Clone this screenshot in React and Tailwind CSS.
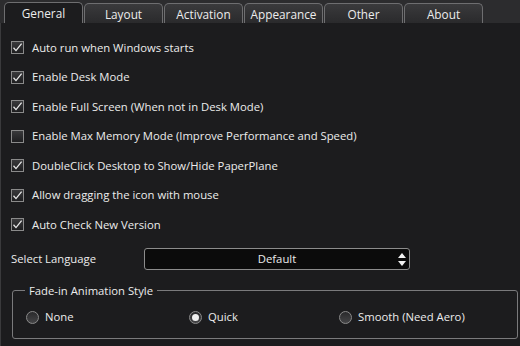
import React from "react";

const tabs = ["General", "Layout", "Activation", "Appearance", "Other", "About"];

const options = [
  { label: "Auto run when Windows starts", checked: true },
  { label: "Enable Desk Mode", checked: true },
  { label: "Enable Full Screen (When not in Desk Mode)", checked: true },
  { label: "Enable Max Memory Mode (Improve Performance and Speed)", checked: false },
  { label: "DoubleClick Desktop to Show/Hide PaperPlane", checked: true },
  { label: "Allow dragging the icon with mouse", checked: true },
  { label: "Auto Check New Version", checked: true },
];

const Check = ({ checked }) => (
  <span className="w-[13px] h-[13px] border border-[#8a8a8a] bg-gradient-to-b from-[#3a3a3c] to-[#1e1e20] flex items-center justify-center shrink-0">
    {checked && (
      <svg width="11" height="11" viewBox="0 0 11 11">
        <path d="M1.5 5.8 L4 8.6 L9.6 1.6" fill="none" stroke="#e8e8e8" strokeWidth="1.3" />
      </svg>
    )}
  </span>
);

const Radio = ({ on }) => (
  <span className="w-[13px] h-[13px] rounded-full border border-[#8a8a8a] bg-gradient-to-b from-[#2a2a2c] to-[#444446] flex items-center justify-center shrink-0">
    {on && <span className="w-[7px] h-[7px] rounded-full bg-[#f0f0f0]" />}
  </span>
);

export default function App() {
  return (
    <div
      className="w-[520px] h-[346px] bg-[#2c2c2e] flex flex-col overflow-hidden text-[#ececec] text-[11.3px]"
      style={{ fontFamily: '"Open Sans", "Noto Sans", sans-serif' }}
    >
      <div className="h-[23px] flex items-end pl-[4px] shrink-0 text-[11.8px]">
        {tabs.map((t, i) => (
          <div
            key={t}
            className={
              "w-[79px] mr-[1px] h-[20px] rounded-t-[5px] border border-b-0 border-[#6e6e70] flex items-center justify-center leading-none pt-[2px] " +
              (i === 0 ? "bg-[#1c1c1e] h-[21px]" : "bg-gradient-to-b from-[#3a3a3c] to-[#2a2a2c]")
            }
          >
            {t}
          </div>
        ))}
      </div>
      <div className="flex-1 bg-[#1c1c1e] border-l border-[#3a3a3c] relative">
        <div className="flex flex-col pt-[18px] pl-[10px] gap-[16.5px]">
          {options.map((o) => (
            <div key={o.label} className="flex items-center gap-[8px] h-[13px]">
              <Check checked={o.checked} />
              <span className="leading-none">{o.label}</span>
            </div>
          ))}
        </div>
        <div className="flex items-center mt-[17px] pl-[10px]">
          <span className="w-[133px]">Select Language</span>
          <div className="w-[266px] h-[22px] bg-[#0b0b0b] border border-[#8c8c8c] rounded-[3px] relative flex items-center justify-center">
            <span>Default</span>
            <svg className="absolute right-[2px] top-[3px]" width="10" height="15" viewBox="0 0 10 15">
              <path d="M5 1 L9 6 L1 6 Z" fill="#f2f2f2" />
              <path d="M5 14 L9 9 L1 9 Z" fill="#f2f2f2" />
            </svg>
          </div>
        </div>
        <fieldset className="mt-[15px] ml-[11px] mr-[2px] h-[54px] border border-[#7a7a7c] rounded-[3px] pl-[13px] pr-[15px] pb-0 relative">
          <legend className="px-[4px] -ml-[1px] leading-none">Fade-in Animation Style</legend>
          <div className="flex items-center mt-[13px]">
            <div className="flex items-center gap-[6px] w-[163px]">
              <Radio />
              <span>None</span>
            </div>
            <div className="flex items-center gap-[6px] w-[150px]">
              <Radio on />
              <span>Quick</span>
            </div>
            <div className="flex items-center gap-[6px]">
              <Radio />
              <span>Smooth (Need Aero)</span>
            </div>
          </div>
        </fieldset>
      </div>
    </div>
  );
}
